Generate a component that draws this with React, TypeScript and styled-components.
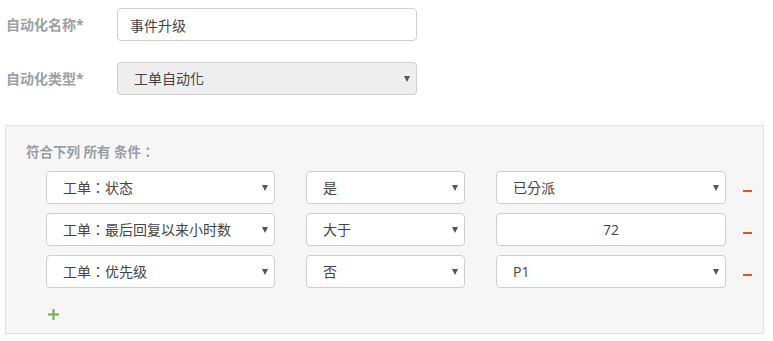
import { createGlobalStyle } from "styled-components";
import styled from "styled-components";

const GlobalStyle = createGlobalStyle`
  body {
    margin: 0;
    background: #fff;
    font-family: "Open Sans", "Noto Sans CJK SC", sans-serif;
    color: #444;
  }
`;

const Page = styled.div`
  padding: 8px 0 0 6px;
`;

const FieldRow = styled.div`
  display: flex;
  align-items: center;
  margin-bottom: 21px;
`;

const Label = styled.label`
  width: 111px;
  font-size: 14px;
  font-weight: bold;
  color: #9a9ea6;
  margin-top: -1px;
`;

const Control = styled.div<{ $width: number }>`
  position: relative;
  width: ${(p) => p.$width}px;
  height: 33px;
`;

const TextInput = styled.input<{ $center?: boolean }>`
  box-sizing: border-box;
  width: 100%;
  height: 100%;
  border: 1px solid #cfcfcf;
  border-radius: 4px;
  padding: 0 12px;
  font: inherit;
  font-size: 14px;
  color: #444;
  background: #fff;
  text-align: ${(p) => (p.$center ? "center" : "left")};
  outline: none;
`;

const Select = styled.select<{ $disabled?: boolean }>`
  box-sizing: border-box;
  appearance: none;
  width: 100%;
  height: 100%;
  border: 1px solid #cfcfcf;
  border-radius: 4px;
  padding: 0 24px 0 16px;
  font-family: "Open Sans", "Noto Sans CJK TC", sans-serif;
  font-size: 14px;
  color: #444;
  background: ${(p) => (p.$disabled ? "#eeeeee" : "#fff")};
  outline: none;
`;

const Arrow = styled.span`
  position: absolute;
  right: 7px;
  top: 14px;
  width: 0;
  height: 0;
  border-left: 3.5px solid transparent;
  border-right: 3.5px solid transparent;
  border-top: 6px solid #555;
  pointer-events: none;
`;

const Panel = styled.div`
  margin: 30px 0 0 -1px;
  width: 759px;
  box-sizing: border-box;
  background: #f6f6f6;
  border: 1px solid #e2e2e2;
  padding: 15px 0 8px 20px;
`;

const PanelTitle = styled.div`
  font-size: 13.5px;
  font-weight: bold;
  color: #9a9ea6;
  height: 20px;
  line-height: 20px;
  margin-bottom: 10px;
`;

const Punct = styled.span`
  font-family: "Noto Sans CJK TC", sans-serif;
`;

const Conditions = styled.div`
  display: flex;
  flex-direction: column;
  gap: 9px;
  padding-left: 20px;
`;

const ConditionRow = styled.div`
  display: flex;
  align-items: center;
  gap: 31px;
`;

const RemoveBtn = styled.span`
  display: block;
  width: 9px;
  height: 2px;
  margin: 6px 0 0 -14px;
  background: #e4541b;
  cursor: pointer;
`;

const AddBtn = styled.span`
  display: inline-flex;
  margin: 21px 0 0 22px;
  cursor: pointer;
`;

const SelectBox = ({
  width,
  value,
  disabled,
}: {
  width: number;
  value: string;
  disabled?: boolean;
}) => (
  <Control $width={width}>
    <Select $disabled={disabled} defaultValue={value}>
      <option>{value}</option>
    </Select>
    <Arrow />
  </Control>
);

const rows = [
  { field: "工单：状态", op: "是", value: "已分派", input: false },
  { field: "工单：最后回复以来小时数", op: "大于", value: "72", input: true },
  { field: "工单：优先级", op: "否", value: "P1", input: false },
];

export default function App() {
  return (
    <>
      <GlobalStyle />
      <Page>
        <FieldRow>
          <Label>自动化名称*</Label>
          <Control $width={300}>
            <TextInput defaultValue="事件升级" />
          </Control>
        </FieldRow>
        <FieldRow>
          <Label>自动化类型*</Label>
          <SelectBox width={300} value="工单自动化" disabled />
        </FieldRow>
        <Panel>
          <PanelTitle>
            符合下列 所有 条件<Punct>：</Punct>
          </PanelTitle>
          <Conditions>
            {rows.map((r, i) => (
              <ConditionRow key={i}>
                <SelectBox width={229} value={r.field} />
                <SelectBox width={159} value={r.op} />
                {r.input ? (
                  <Control $width={230}>
                    <TextInput $center defaultValue={r.value} />
                  </Control>
                ) : (
                  <SelectBox width={230} value={r.value} />
                )}
                <RemoveBtn />
              </ConditionRow>
            ))}
          </Conditions>
          <AddBtn>
            <svg width="11" height="11" viewBox="0 0 11 11">
              <path d="M5.5 0v11M0 5.5h11" stroke="#6ab04c" strokeWidth="2" />
            </svg>
          </AddBtn>
        </Panel>
      </Page>
    </>
  );
}
